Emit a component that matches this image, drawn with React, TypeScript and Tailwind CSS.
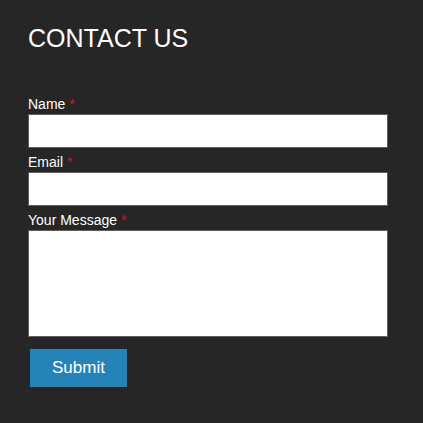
import React from 'react';

const Field: React.FC<{ label: string; children: React.ReactNode; last?: boolean }> = ({ label, children, last }) => (
  <div className={last ? '' : 'mb-[6px]'}>
    <label className="mb-[2px] block text-[14px] leading-[16px] text-white">
      {label} <span className="text-[#ff0000]">*</span>
    </label>
    {children}
  </div>
);

export default function App() {
  return (
    <div
      className="h-[423px] w-[423px] bg-[#262626] pl-[28px] pr-[35px] pt-6"
      style={{ fontFamily: '"Liberation Sans", Arial, sans-serif' }}
    >
      <h1 className="text-[25px] font-normal leading-[28px] text-white">CONTACT US</h1>

      <form className="mt-[44px]" onSubmit={(e) => e.preventDefault()}>
        <Field label="Name">
          <input type="text" className="block h-[34px] w-[360px] border border-[#5f5f5f] bg-white outline-none" />
        </Field>
        <Field label="Email">
          <input type="email" className="block h-[34px] w-[360px] border border-[#5f5f5f] bg-white outline-none" />
        </Field>
        <Field label="Your Message" last>
          <textarea className="block h-[107px] w-[360px] resize-none border border-[#5f5f5f] bg-white outline-none" />
        </Field>
        <button
          type="submit"
          className="ml-[2px] mt-[12px] h-[38px] w-[97px] bg-[#2683b8] text-[17px] text-white"
        >
          Submit
        </button>
      </form>
    </div>
  );
}
